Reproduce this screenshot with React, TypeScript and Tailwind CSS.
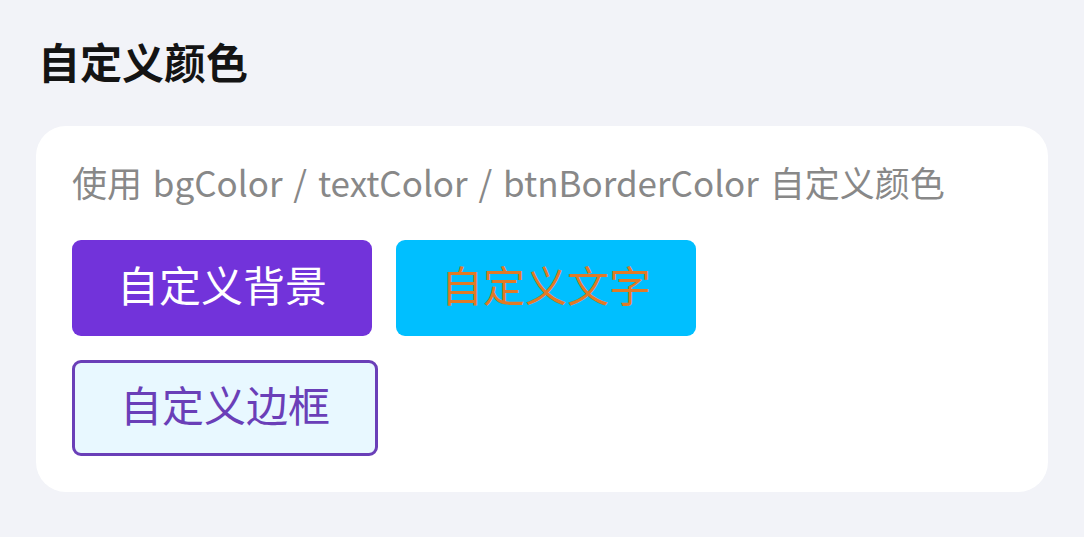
const font = { fontFamily: 'Roboto, "Noto Sans CJK SC", "Noto Sans", sans-serif' };
const descFont = { fontFamily: '"Noto Sans CJK SC", "Noto Sans", sans-serif' };

const buttons = [
  { label: '自定义背景', className: 'bg-[#7233da] text-white' },
  { label: '自定义文字', className: 'bg-[#00bfff] text-[#e07a26]' },
  { label: '自定义边框', className: 'bg-[#e8f8ff] text-[#6a3fb8] border-[3px] border-[#6a3fb8]' },
];

export default function App() {
  return (
    <div className="min-h-[537px] bg-[#f2f3f8] px-9 pt-[40px] pb-10" style={font}>
      <h2 className="text-[42px] leading-[50px] font-bold text-[#141414] mb-[36px] pl-[2px]">自定义颜色</h2>
      <div className="bg-white rounded-[30px] px-9 pt-9 pb-9">
        <p className="text-[35px] leading-[40px] text-[#888888] mb-[38px] [word-spacing:3px]" style={descFont}>
          使用 bgColor / textColor / btnBorderColor 自定义颜色
        </p>
        <div className="flex flex-wrap gap-6">
          {buttons.map(b => (
            <button
              key={b.label}
              className={`h-24 px-[45px] rounded-[9px] text-[42px] leading-none flex items-center justify-center ${b.className}`}
            >
              {b.label}
            </button>
          ))}
        </div>
      </div>
    </div>
  );
}
